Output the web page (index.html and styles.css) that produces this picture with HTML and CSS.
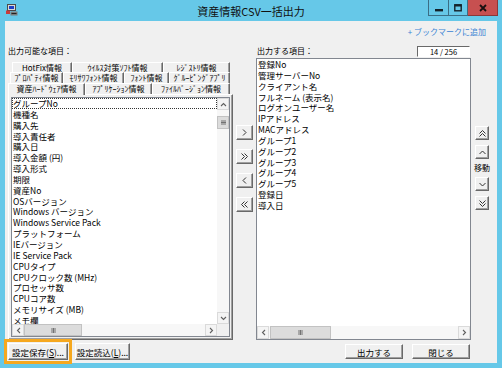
FILE: index.html
```html
<!DOCTYPE html>
<html lang="ja">
<head>
<meta charset="utf-8">
<title>資産情報CSV一括出力</title>
<link rel="stylesheet" href="styles.css">
</head>
<body>
<div class="window">
  <div class="titlebar">
    <div class="tb-left">
      <svg class="appicon" viewBox="0 0 12 12">
        <rect x="1.5" y="0.5" width="8" height="6" fill="#d9d9d9" stroke="#4a4a4a"/>
        <rect x="3" y="2" width="5" height="3" fill="#1d3fc4"/>
        <rect x="0" y="6.5" width="4" height="3.5" fill="#c93c3c"/>
        <path d="M4.5 7.5 L11.5 7.5 L11.5 11.5 L4.5 11.5 Z" fill="#7a7a7a"/>
        <path d="M5.5 9.5 L10.5 9.5" stroke="#222" stroke-width="1"/>
      </svg>
    </div>
    <div class="title">資産情報CSV一括出力</div>
    <div class="tb-right">
      <span class="ctl min"><svg viewBox="0 0 8 8" class="cg"><rect x="0" y="5" width="8" height="2.4" fill="#14222a"/></svg></span>
      <span class="ctl max"><svg viewBox="0 0 8 8" class="cg"><rect x="0.8" y="0.8" width="6.4" height="6" fill="none" stroke="#14222a" stroke-width="1.4"/><rect x="0.5" y="0.5" width="7" height="2" fill="#14222a"/></svg></span>
      <span class="ctl close"><svg viewBox="0 0 8 8" class="cg"><path d="M1 1 L7 7 M7 1 L1 7" stroke="#1a1010" stroke-width="1.8"/></svg></span>
    </div>
  </div>

  <div class="client">
    <div class="linkrow"><span class="link">+ ブックマークに追加</span></div>
    <div class="main">
      <div class="leftcol">
        <div class="label">出力可能な項目：</div>
        <div class="tabs">
          <div class="tabrow r1">
            <span class="tab">HotFix情報</span>
            <span class="tab">ｳｲﾙｽ対策ｿﾌﾄ情報</span>
            <span class="tab">ﾚｼﾞｽﾄﾘ情報</span>
          </div>
          <div class="tabrow r2">
            <span class="tab">ﾌﾟﾛﾊﾟﾃｨ情報</span>
            <span class="tab">ﾓﾘｻﾜﾌｫﾝﾄ情報</span>
            <span class="tab">ﾌｫﾝﾄ情報</span>
            <span class="tab">ｸﾞﾙｰﾋﾟﾝｸﾞｱﾌﾟﾘ</span>
          </div>
          <div class="tabrow r3">
            <span class="tab sel">資産ﾊｰﾄﾞｳｪｱ情報</span>
            <span class="tab">ｱﾌﾟﾘｹｰｼｮﾝ情報</span>
            <span class="tab">ﾌｧｲﾙﾊﾞｰｼﾞｮﾝ情報</span>
          </div>
        </div>
        <div class="panel">
          <div class="lb">
            <div class="items">
              <div class="item focus">グループNo</div>
              <div class="item">機種名</div>
              <div class="item">購入先</div>
              <div class="item">導入責任者</div>
              <div class="item">購入日</div>
              <div class="item">導入金額 (円)</div>
              <div class="item">導入形式</div>
              <div class="item">期限</div>
              <div class="item">資産No</div>
              <div class="item">OSバージョン</div>
              <div class="item">Windows バージョン</div>
              <div class="item">Windows Service Pack</div>
              <div class="item">プラットフォーム</div>
              <div class="item">IEバージョン</div>
              <div class="item">IE Service Pack</div>
              <div class="item">CPUタイプ</div>
              <div class="item">CPUクロック数 (MHz)</div>
              <div class="item">プロセッサ数</div>
              <div class="item">CPUコア数</div>
              <div class="item">メモリサイズ (MB)</div>
              <div class="item">メモ欄</div>
            </div>
            <div class="vs">
              <span class="sbb"><svg viewBox="0 0 7 5" class="sa"><polyline points="1,4 3.5,1.5 6,4"/></svg></span>
              <span class="vthumb"><svg viewBox="0 0 5 5" class="grip"><path d="M0 1 H5 M0 2.5 H5 M0 4 H5"/></svg></span>
              <span class="track"></span>
              <span class="sbb"><svg viewBox="0 0 7 5" class="sa"><polyline points="1,1 3.5,3.5 6,1"/></svg></span>
            </div>
            <div class="hs">
              <span class="sbb"><svg viewBox="0 0 5 7" class="sa v"><polyline points="4,1 1.5,3.5 4,6"/></svg></span>
              <span class="hthumb lthumb"><svg viewBox="0 0 5 5" class="grip"><path d="M1 0 V5 M2.5 0 V5 M4 0 V5"/></svg></span>
              <span class="track"></span>
              <span class="sbb"><svg viewBox="0 0 5 7" class="sa v"><polyline points="1,1 3.5,3.5 1,6"/></svg></span>
            </div>
            <div class="corner"></div>
          </div>
        </div>
        <div class="lbtns">
          <span class="btn b-save">設定保存(<u>S</u>)...</span>
          <span class="btn b-load">設定読込(<u>L</u>)...</span>
        </div>
      </div>

      <div class="midcol">
        <span class="btn abtn"><svg viewBox="0 0 9 9" class="ag"><polyline points="3,1.5 6,4.5 3,7.5"/></svg></span>
        <span class="btn abtn"><svg viewBox="0 0 9 9" class="ag"><polyline points="1.5,1.5 4.5,4.5 1.5,7.5"/><polyline points="4.5,1.5 7.5,4.5 4.5,7.5"/></svg></span>
        <span class="btn abtn"><svg viewBox="0 0 9 9" class="ag"><polyline points="6,1.5 3,4.5 6,7.5"/></svg></span>
        <span class="btn abtn"><svg viewBox="0 0 9 9" class="ag"><polyline points="4.5,1.5 1.5,4.5 4.5,7.5"/><polyline points="7.5,1.5 4.5,4.5 7.5,7.5"/></svg></span>
      </div>

      <div class="rightcol">
        <div class="rhead">
          <span class="rlabel">出力する項目：</span>
          <span class="counter">14 / 256</span>
        </div>
        <div class="lb rlist">
          <div class="items">
            <div class="item">登録No</div>
            <div class="item">管理サーバーNo</div>
            <div class="item">クライアント名</div>
            <div class="item">フルネーム (表示名)</div>
            <div class="item">ログオンユーザー名</div>
            <div class="item">IPアドレス</div>
            <div class="item">MACアドレス</div>
            <div class="item">グループ1</div>
            <div class="item">グループ2</div>
            <div class="item">グループ3</div>
            <div class="item">グループ4</div>
            <div class="item">グループ5</div>
            <div class="item">登録日</div>
            <div class="item">導入日</div>
          </div>
          <div class="hs">
            <span class="sbb"><svg viewBox="0 0 5 7" class="sa v"><polyline points="4,1 1.5,3.5 4,6"/></svg></span>
            <span class="hthumb rthumb"><svg viewBox="0 0 5 5" class="grip"><path d="M1 0 V5 M2.5 0 V5 M4 0 V5"/></svg></span>
            <span class="track"></span>
            <span class="sbb"><svg viewBox="0 0 5 7" class="sa v"><polyline points="1,1 3.5,3.5 1,6"/></svg></span>
          </div>
        </div>
        <div class="rbtns">
          <span class="btn b-out">出力する</span>
          <span class="btn b-close">閉じる</span>
        </div>
      </div>

      <div class="movecol">
        <span class="btn mvbtn"><svg viewBox="0 0 9 9" class="ag"><polyline points="1.5,4.5 4.5,1.5 7.5,4.5"/><polyline points="1.5,7.5 4.5,4.5 7.5,7.5"/></svg></span>
        <span class="btn mvbtn"><svg viewBox="0 0 9 9" class="ag"><polyline points="1.5,6 4.5,3 7.5,6"/></svg></span>
        <span class="mvlabel">移動</span>
        <span class="btn mvbtn"><svg viewBox="0 0 9 9" class="ag"><polyline points="1.5,3 4.5,6 7.5,3"/></svg></span>
        <span class="btn mvbtn"><svg viewBox="0 0 9 9" class="ag"><polyline points="1.5,1.5 4.5,4.5 7.5,1.5"/><polyline points="1.5,4.5 4.5,7.5 7.5,4.5"/></svg></span>
      </div>
    </div>
  </div>
</div>
</body>
</html>
```

FILE: styles.css
```css
* { box-sizing: border-box; }
html, body { margin: 0; padding: 0; }
body {
  width: 502px;
  height: 368px;
  overflow: hidden;
  background: #66c8e8;
  font-family: "Noto Sans CJK JP", "Noto Sans", sans-serif;
  color: #000;
}
.window {
  width: 502px;
  height: 368px;
  background: #66c8e8;
  display: flex;
  flex-direction: column;
}

/* title bar */
.titlebar {
  height: 21px;
  display: grid;
  grid-template-columns: 1fr auto 1fr;
  align-items: start;
}
.tb-left { padding: 4px 0 0 6px; }
.appicon { width: 12px; height: 12px; display: block; }
.title {
  font-size: 11px;
  line-height: 22px;
  white-space: nowrap;
  color: #111;
}
.tb-right {
  display: flex;
  justify-content: flex-end;
  padding-right: 4px;
}
.ctl {
  height: 16px;
  display: flex;
  align-items: center;
  justify-content: center;
  border: 1px solid #3b6e85;
  border-top: none;
}
.ctl + .ctl { border-left: none; }
.min { width: 21px; }
.max { width: 19px; }
.close { width: 30px; background: #c75050; border-color: #8a3838; }
.cg { width: 8px; height: 8px; display: block; }

/* client area */
.client {
  margin: 0 5px;
  height: 342px;
  background: #f0f0f0;
  display: flex;
  flex-direction: column;
}
.linkrow {
  height: 21px;
  display: flex;
  justify-content: flex-end;
  align-items: center;
  padding-right: 11px;
}
.link {
  color: #3b84d4;
  font-size: 8px;
  white-space: nowrap;
}
.main {
  flex: 1;
  display: flex;
  padding-left: 3px;
}

/* left column */
.leftcol {
  width: 225px;
  display: flex;
  flex-direction: column;
}
.label {
  height: 20px;
  font-size: 8px;
  line-height: 18px;
  white-space: nowrap;
}
.tabs {
  position: relative;
  z-index: 1;
  display: flex;
  flex-direction: column;
}
.tabrow { display: flex; }
.r1 { height: 10px; padding-left: 4px; }
.r2 { height: 11px; padding-left: 2px; }
.r3 { height: 11px; padding-left: 2px; }
.tab {
  height: 11px;
  font-size: 8px;
  line-height: 10px;
  text-align: center;
  white-space: nowrap;
  overflow: hidden;
  border-top: 1px solid #fff;
  border-left: 1px solid #fff;
  border-right: 1px solid #696969;
  box-shadow: inset -1px 0 #a0a0a0;
  background: #f0f0f0;
}
.r1 .tab { height: 10px; line-height: 9px; }
.r1 .tab:nth-child(1) { width: 60px; }
.r1 .tab:nth-child(2) { width: 91px; }
.r1 .tab:nth-child(3) { width: 67px; }
.r2 .tab:nth-child(1) { width: 53px; }
.r2 .tab:nth-child(2) { width: 61px; }
.r2 .tab:nth-child(3) { width: 45px; }
.r2 .tab:nth-child(4) { width: 61px; }
.r3 .tab:nth-child(1) { width: 75px; }
.r3 .tab:nth-child(2) { width: 67px; }
.r3 .tab:nth-child(3) { width: 78px; }
.r3 .tab.sel {
  width: 77px;
  height: 12px;
  margin-left: -2px;
  line-height: 10px;
  position: relative;
  z-index: 2;
}
.panel {
  height: 246px;
  border: 1px solid;
  border-color: #fff #696969 #696969 #fff;
  box-shadow: inset -1px -1px #a0a0a0;
  padding: 2px;
}

/* list boxes */
.lb {
  height: 100%;
  background: #fff;
  border: 1px solid #828790;
  display: grid;
  grid-template-columns: 1fr 12px;
  grid-template-rows: 1fr 12px;
}
.items {
  overflow: hidden;
  min-width: 0;
}
.item {
  height: 10.85px;
  line-height: 10.85px;
  font-size: 8.5px;
  padding-left: 1px;
  white-space: nowrap;
}
.item.focus {
  outline: 1px dotted #333;
  outline-offset: -1px;
}
.vs {
  display: flex;
  flex-direction: column;
  background: #f7f7f7;
}
.hs {
  display: flex;
  background: #f7f7f7;
}
.track { flex: 1; }
.sbb {
  width: 12px;
  height: 12px;
  flex: none;
  background: #f4f4f4;
  border: 1px solid #dadada;
  display: flex;
  align-items: center;
  justify-content: center;
}
.sa {
  width: 7px;
  height: 5px;
  fill: none;
  stroke: #606060;
  stroke-width: 1.1;
}
.sa.v { width: 5px; height: 7px; }
.vthumb {
  height: 13px;
  margin-top: 6px;
  background: #dcdcdc;
  border: 1px solid #c2c2c2;
  display: flex;
  align-items: center;
  justify-content: center;
}
.hthumb {
  height: 12px;
  background: #dcdcdc;
  border: 1px solid #c2c2c2;
  display: flex;
  align-items: center;
  justify-content: center;
}
.lthumb { width: 58px; margin-left: 0; }
.rthumb { width: 61px; margin-left: 1px; }
.grip {
  width: 5px;
  height: 5px;
  stroke: #666;
  stroke-width: 0.9;
}
.corner { background: #f0f0f0; }

/* classic buttons */
.btn {
  background: #f0f0f0;
  border: 1px solid;
  border-color: #fff #696969 #696969 #fff;
  box-shadow: inset -1px -1px #a0a0a0;
  display: flex;
  align-items: center;
  justify-content: center;
  font-size: 8.5px;
  white-space: nowrap;
  flex: none;
}
.btn u { text-decoration-thickness: 1px; text-underline-offset: 1px; }
.ag {
  width: 9px;
  height: 9px;
  fill: none;
  stroke: #333;
  stroke-width: 1;
}

.lbtns {
  display: flex;
  margin-top: 3px;
}
.b-save {
  width: 60px;
  height: 17px;
  outline: 3px solid #f6a81f;
  outline-offset: 1px;
}
.b-load {
  width: 55px;
  height: 17px;
  margin-left: 7px;
}

/* middle column */
.midcol {
  width: 17px;
  margin-left: 3px;
  padding-top: 83px;
  display: flex;
  flex-direction: column;
  gap: 9px;
}
.abtn { height: 15px; }

/* right column */
.rightcol {
  width: 215px;
  margin-left: 3px;
  display: flex;
  flex-direction: column;
}
.rhead {
  height: 16px;
  display: flex;
  justify-content: space-between;
}
.rlabel {
  font-size: 8px;
  line-height: 18px;
  padding-left: 1px;
  white-space: nowrap;
}
.counter {
  width: 53px;
  height: 11px;
  margin-top: 4px;
  margin-right: 1px;
  border: 1px solid;
  border-color: #696969 #fff #fff #696969;
  background: #fff;
  font-size: 7.5px;
  line-height: 9px;
  text-align: center;
  white-space: nowrap;
}
.rlist {
  height: 282px;
  flex: none;
  grid-template-columns: 1fr;
  grid-template-rows: 1fr 13px;
}
.rlist .hs .sbb { height: 13px; }
.rlist .hthumb { height: 13px; }
.rbtns {
  display: flex;
  justify-content: flex-end;
  gap: 9px;
  padding-right: 1px;
  margin-top: 4px;
}
.b-out, .b-close { width: 58px; height: 15px; }

/* move column */
.movecol {
  width: 14px;
  margin-left: 4px;
  padding-top: 84px;
  display: flex;
  flex-direction: column;
  align-items: center;
}
.mvbtn { width: 14px; height: 14px; }
.mvbtn + .mvbtn { margin-top: 5px; }
.mvlabel {
  height: 18px;
  font-size: 8px;
  line-height: 18px;
  white-space: nowrap;
}
```
